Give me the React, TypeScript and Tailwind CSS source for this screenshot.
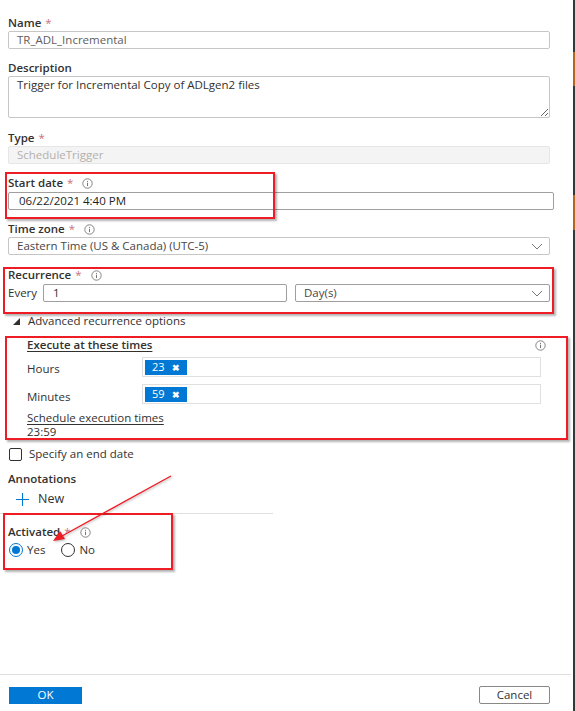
import React from 'react';

const InfoIcon = () => (
  <svg width="11" height="11" viewBox="0 0 11 11" className="block">
    <circle cx="5.5" cy="5.5" r="4.7" fill="none" stroke="#777" strokeWidth="0.9" />
    <rect x="5" y="4.7" width="1" height="3.4" fill="#777" />
    <rect x="5" y="2.9" width="1" height="1" fill="#777" />
  </svg>
);

const Chevron = () => (
  <svg width="12" height="7" viewBox="0 0 12 7" className="block">
    <path d="M1 1l5 5 5-5" fill="none" stroke="#777" strokeWidth="1" />
  </svg>
);

const FieldLabel = ({ text, required, info }: { text: string; required?: boolean; info?: boolean }) => (
  <div className="flex items-center h-4 font-semibold text-[#323130]">
    <span>{text}</span>
    {required && <span className="ml-1 font-normal text-[#c9707a]">*</span>}
    {info && (
      <span className="ml-[9px]">
        <InfoIcon />
      </span>
    )}
  </div>
);

const Tag = ({ value }: { value: string }) => (
  <div className="flex items-center h-[15px] w-[42px] bg-[#0078d4] text-white text-[11px] pl-[7px]">
    <span>{value}</span>
    <span className="ml-auto mr-[7px] text-[9px] font-bold leading-none">✖</span>
  </div>
);

export default function App() {
  return (
    <div className="relative w-[575px] h-[711px] bg-white overflow-hidden font-['Open_Sans',sans-serif] text-[11.5px] text-[#323130]">
      <div className="flex h-full">
        <div className="flex-1 flex flex-col">
          {/* Trigger form */}
          <div className="flex-1 pl-2 pr-[23px] pt-[15px]">
            <FieldLabel text="Name" required />
            <div className="h-[18px] border border-[#c8c6c4] rounded-[2px] pl-2 flex items-center text-[#605e5c]">
              TR_ADL_Incremental
            </div>

            <div className="mt-[11px]">
              <FieldLabel text="Description" />
            </div>
            <textarea
              readOnly
              defaultValue="Trigger for Incremental Copy of ADLgen2 files"
              className="block w-full h-[42px] border border-[#c8c6c4] rounded-[2px] pl-2 py-0 leading-4 text-[#323130] outline-none"
            />

            <div className="mt-[12px]">
              <FieldLabel text="Type" required />
            </div>
            <div className="h-[18px] border border-[#e6e6e6] bg-[#f4f4f4] rounded-[2px] pl-2 flex items-center text-[#b3b0ad]">
              ScheduleTrigger
            </div>

            <div className="mt-[11px]">
              <FieldLabel text="Start date" required info />
            </div>
            <div className="mt-px mr-[-4px] h-[18px] border border-[#a19f9d] rounded-[2px] pl-[10px] flex items-center text-[#201f1e]">
              06/22/2021 4:40 PM
            </div>

            <div className="mt-[11px]">
              <FieldLabel text="Time zone" required info />
            </div>
            <div className="h-[18px] border border-[#c8c6c4] rounded-[2px] pl-2 pr-[6px] flex items-center justify-between text-[#484644]">
              <span>Eastern Time (US &amp; Canada) (UTC-5)</span>
              <Chevron />
            </div>

            <div className="mt-[12px]">
              <FieldLabel text="Recurrence" required info />
            </div>
            <div className="mt-px flex items-center h-[18px]">
              <span className="w-[35px] text-[#323130]">Every</span>
              <div className="w-[244px] h-[18px] border border-[#a19f9d] rounded-[2px] pl-[9px] flex items-center">1</div>
              <div className="ml-2 flex-1 h-[18px] border border-[#a19f9d] rounded-[2px] pl-2 pr-[6px] flex items-center justify-between text-[#484644]">
                <span>Day(s)</span>
                <Chevron />
              </div>
            </div>

            <div className="mt-[11px] flex items-center h-4">
              <span className="ml-[5px] w-[15px] flex">
                <svg width="7" height="7" viewBox="0 0 7 7" className="block">
                  <path d="M7 0V7H0Z" fill="#323130" />
                </svg>
              </span>
              <span>Advanced recurrence options</span>
            </div>

            {/* Advanced recurrence */}
            <div className="mt-2 pl-[19px] pr-[4px]">
              <div className="flex items-center h-4">
                <span className="font-semibold underline underline-offset-2">Execute at these times</span>
                <span className="ml-auto">
                  <InfoIcon />
                </span>
              </div>
              <div className="mt-[4px] flex items-center h-5">
                <span className="w-[115px] translate-y-[2px]">Hours</span>
                <div className="w-[399px] h-5 border border-[#e1dfdd] flex items-center pl-[2px]">
                  <Tag value="23" />
                </div>
              </div>
              <div className="mt-[7px] flex items-center h-5">
                <span className="w-[115px] translate-y-[3px]">Minutes</span>
                <div className="w-[399px] h-5 border border-[#e1dfdd] flex items-center pl-[2px]">
                  <Tag value="59" />
                </div>
              </div>
              <div className="mt-[7px] leading-[14px] underline underline-offset-2">Schedule execution times</div>
              <div className="leading-[14px]">23:59</div>
            </div>

            <div className="mt-[8px] flex items-center h-[14px]">
              <span className="ml-px w-[13px] h-[13px] border border-[#323130] rounded-[2px]" />
              <span className="ml-[7px]">Specify an end date</span>
            </div>

            <div className="mt-[10px]">
              <FieldLabel text="Annotations" />
            </div>
            <div className="mt-[4px] flex items-center h-4">
              <svg width="13" height="13" viewBox="0 0 13 13" className="ml-2 block">
                <path d="M6.5 0v13M0 6.5h13" stroke="#0078d4" strokeWidth="1.1" />
              </svg>
              <span className="ml-[9px] text-[12.5px]">New</span>
            </div>
            <div className="mt-[6px] -ml-2 w-[273px] h-px bg-[#e1dfdd]" />

            <div className="mt-[10px]">
              <FieldLabel text="Activated" required info />
            </div>
            <div className="mt-[3px] flex items-center h-[14px]">
              <span className="ml-px w-[14px] h-[14px] rounded-full border border-[#0078d4] flex items-center justify-center">
                <span className="w-2 h-2 rounded-full bg-[#0078d4]" />
              </span>
              <span className="ml-[4px]">Yes</span>
              <span className="ml-[16px] w-[14px] h-[14px] rounded-full border border-[#323130]" />
              <span className="ml-[4px]">No</span>
            </div>
          </div>

          {/* Footer */}
          <div className="border-t border-[#e1dfdd] mr-[2px] pt-[11px] pb-[7px] flex items-center justify-between">
            <button className="ml-[9px] w-[73px] h-[17px] bg-[#0078d4] text-white text-[11.5px] leading-none">OK</button>
            <button className="mr-[21px] w-[71px] h-[18px] border border-[#8a8886] rounded-[2px] bg-white text-[11.5px] leading-none text-[#323130]">
              Cancel
            </button>
          </div>
        </div>

        {/* Scrollbar strip */}
        <div className="w-[2px] bg-[#33383b] flex flex-col">
          <div className="h-[52px]" />
          <div className="h-[34px] bg-[#b8651f]" />
          <div className="h-[109px]" />
          <div className="h-[35px] bg-[#b8651f]" />
        </div>
      </div>

      {/* Red highlight annotations */}
      <div className="absolute left-[5px] top-[172px] w-[270px] h-[47px] border-2 border-[#ee1c24] shadow-[2px_2px_2px_rgba(0,0,0,0.3)] pointer-events-none" />
      <div className="absolute left-[3px] top-[267px] w-[551px] h-[47px] border-2 border-[#ee1c24] shadow-[2px_2px_2px_rgba(0,0,0,0.3)] pointer-events-none" />
      <div className="absolute left-[5px] top-[336px] w-[563px] h-[104px] border-2 border-[#ee1c24] shadow-[2px_2px_2px_rgba(0,0,0,0.3)] pointer-events-none" />
      <div className="absolute left-[3px] top-[513px] w-[170px] h-[57px] border-2 border-[#ee1c24] shadow-[2px_2px_2px_rgba(0,0,0,0.3)] pointer-events-none" />
      <svg className="absolute left-0 top-0 pointer-events-none" width="575" height="711" viewBox="0 0 575 711">
        <g style={{ filter: 'drop-shadow(1px 1px 1px rgba(0,0,0,0.3))' }}>
          <line x1="171" y1="476" x2="62" y2="536" stroke="#ee1c24" strokeWidth="1.4" />
          <path d="M53 541 L60 531 L65 539 Z" fill="#ee1c24" />
        </g>
      </svg>
    </div>
  );
}
